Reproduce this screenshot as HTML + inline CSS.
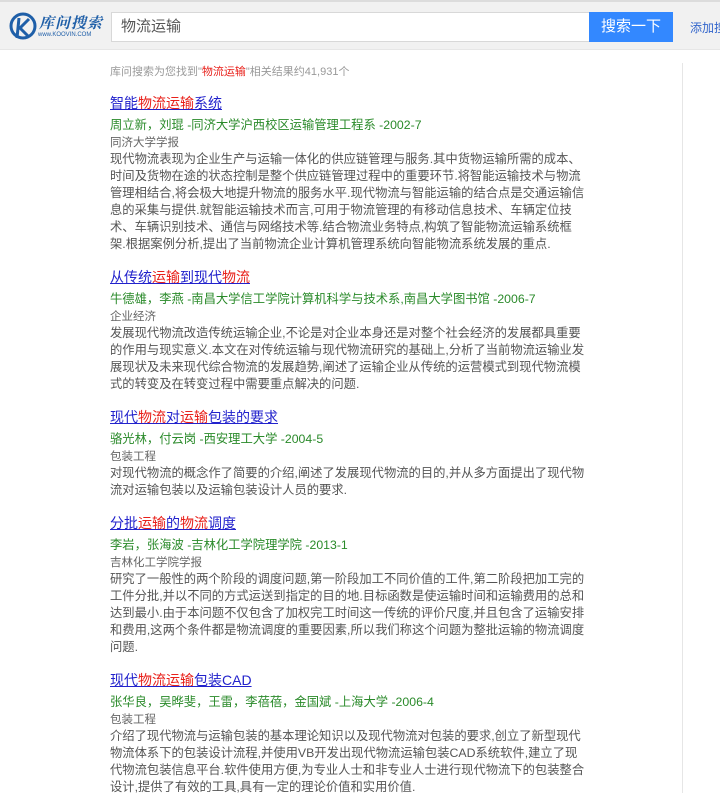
<!DOCTYPE html>
<html><head><meta charset="utf-8"><style>
*{margin:0;padding:0;box-sizing:border-box}
body{width:720px;height:793px;overflow:hidden;background:#fff;font-family:"Liberation Sans","Noto Sans CJK SC",sans-serif;position:relative}
.hdr{position:absolute;left:0;top:0;width:720px;height:50px;background:#f1f1f1;border-top:2px solid #dcdcdc;border-bottom:1px solid #e6e6e6}
.inp{position:absolute;left:111px;top:10px;width:479px;height:30px;background:#fff;border:1px solid #d8d8d8;font-size:15px;color:#555;line-height:28px;padding-left:9px}
.btn{position:absolute;left:589px;top:10px;width:84px;height:30px;background:#3388ff;color:#fff;font-size:15px;line-height:30px;text-align:center}
.add{position:absolute;left:690px;top:17px;font-size:12px;color:#3366cc;white-space:nowrap}
.vline{position:absolute;left:682px;top:63px;width:1px;height:730px;background:#e6e6e6}
.stat{position:absolute;left:110px;top:65px;font-size:11px;color:#999;line-height:14px}
.res{position:absolute;left:110px;top:92px;width:480px}
.r{margin-bottom:13px}
.t{font-size:14px;line-height:22px;color:#2222cc;text-decoration:underline;white-space:nowrap}
.t em,.stat em{color:#e8201a;font-style:normal}
.a{font-size:12.3px;line-height:20px;margin-top:1px;color:#2a8a2a;white-space:nowrap}
.j{font-size:11.5px;line-height:16px;color:#666}
.d{font-size:12.3px;line-height:17px;color:#555;white-space:nowrap}
</style></head><body>
<div class="hdr">
 <svg style="position:absolute;left:7px;top:9px" width="32" height="32" viewBox="0 0 32 32"><circle cx="16" cy="15" r="12" fill="none" stroke="#1f5fa8" stroke-width="3"/><path d="M12 7 L10 27 M22 8 L13 17 L21 25" stroke="#1f5fa8" stroke-width="3" fill="none"/></svg>
 <div style="position:absolute;left:39px;top:10px;font-family:'Liberation Serif','Noto Serif CJK SC',serif;font-style:italic;font-weight:bold;font-size:15px;color:#1f5fa8;letter-spacing:1px">库问搜索</div>
 <div style="position:absolute;left:38px;top:30px;font-size:6px;color:#1f5fa8">www.KOOVIN.COM</div>
 <div class="inp">物流运输</div>
 <div class="btn">搜索一下</div>
 <div class="add">添加搜</div>
</div>
<div class="vline"></div>
<div class="stat">库问搜索为您找到"<em>物流运输</em>"相关结果约41,931个</div>
<div class="res">
<div class="r"><div class="t">智能<em>物流运输</em>系统</div>
<div class="a">周立新，刘琨 -同济大学沪西校区运输管理工程系 -2002-7</div>
<div class="j">同济大学学报</div>
<div class="d">现代物流表现为企业生产与运输一体化的供应链管理与服务.其中货物运输所需的成本、<br>时间及货物在途的状态控制是整个供应链管理过程中的重要环节.将智能运输技术与物流<br>管理相结合,将会极大地提升物流的服务水平.现代物流与智能运输的结合点是交通运输信<br>息的采集与提供.就智能运输技术而言,可用于物流管理的有移动信息技术、车辆定位技<br>术、车辆识别技术、通信与网络技术等.结合物流业务特点,构筑了智能物流运输系统框<br>架.根据案例分析,提出了当前物流企业计算机管理系统向智能物流系统发展的重点.</div></div>
<div class="r"><div class="t">从传统<em>运输</em>到现代<em>物流</em></div>
<div class="a">牛德雄，李燕 -南昌大学信工学院计算机科学与技术系,南昌大学图书馆 -2006-7</div>
<div class="j">企业经济</div>
<div class="d">发展现代物流改造传统运输企业,不论是对企业本身还是对整个社会经济的发展都具重要<br>的作用与现实意义.本文在对传统运输与现代物流研究的基础上,分析了当前物流运输业发<br>展现状及未来现代综合物流的发展趋势,阐述了运输企业从传统的运营模式到现代物流模<br>式的转变及在转变过程中需要重点解决的问题.</div></div>
<div class="r"><div class="t">现代<em>物流</em>对<em>运输</em>包装的要求</div>
<div class="a">骆光林，付云岗 -西安理工大学 -2004-5</div>
<div class="j">包装工程</div>
<div class="d">对现代物流的概念作了简要的介绍,阐述了发展现代物流的目的,并从多方面提出了现代物<br>流对运输包装以及运输包装设计人员的要求.</div></div>
<div class="r"><div class="t">分批<em>运输</em>的<em>物流</em>调度</div>
<div class="a">李岩，张海波 -吉林化工学院理学院 -2013-1</div>
<div class="j">吉林化工学院学报</div>
<div class="d">研究了一般性的两个阶段的调度问题,第一阶段加工不同价值的工件,第二阶段把加工完的<br>工件分批,并以不同的方式运送到指定的目的地.目标函数是使运输时间和运输费用的总和<br>达到最小.由于本问题不仅包含了加权完工时间这一传统的评价尺度,并且包含了运输安排<br>和费用,这两个条件都是物流调度的重要因素,所以我们称这个问题为整批运输的物流调度<br>问题.</div></div>
<div class="r"><div class="t">现代<em>物流运输</em>包装CAD</div>
<div class="a">张华良，吴晔斐，王雷，李蓓蓓，金国斌 -上海大学 -2006-4</div>
<div class="j">包装工程</div>
<div class="d">介绍了现代物流与运输包装的基本理论知识以及现代物流对包装的要求,创立了新型现代<br>物流体系下的包装设计流程,并使用VB开发出现代物流运输包装CAD系统软件,建立了现<br>代物流包装信息平台.软件使用方便,为专业人士和非专业人士进行现代物流下的包装整合<br>设计,提供了有效的工具,具有一定的理论价值和实用价值.</div></div>
</div>
</body></html>
